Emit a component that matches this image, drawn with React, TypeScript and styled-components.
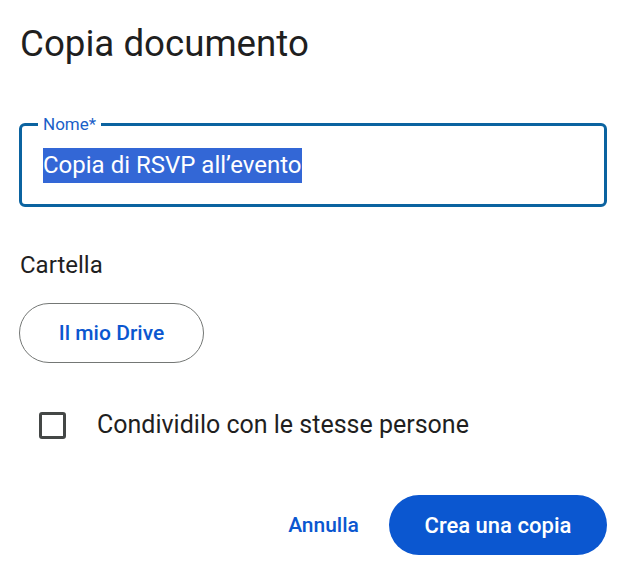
import React from 'react'
import styled, { createGlobalStyle } from 'styled-components'

const Global = createGlobalStyle`
	body {
		margin: 0;
		background: #ffffff;
		font-family: Roboto, "Noto Sans", sans-serif;
		color: #1f1f1f;
	}
`

const Dialog = styled.div`
	width: 626px;
	height: 576px;
	box-sizing: border-box;
	padding: 22px 19px 0 19px;
	display: flex;
	flex-direction: column;
`

const Title = styled.h1`
	margin: 0 0 0 1px;
	font-size: 36.7px;
	font-weight: 400;
	line-height: 44px;
	color: #1f1f1f;
`

const Field = styled.div`
	position: relative;
	margin-top: 57px;
	height: 84px;
	box-sizing: border-box;
	border: 3px solid #0b63a0;
	border-radius: 6px;
	padding: 0 21px;
	display: flex;
	align-items: center;
`

const FloatLabel = styled.span`
	position: absolute;
	top: -12px;
	left: 16px;
	padding: 0 5px;
	background: #ffffff;
	font-size: 17px;
	line-height: 20px;
	color: #1a5fc8;
`

const Selected = styled.span`
	background: #3367d6;
	color: #ffffff;
	font-size: 24px;
	line-height: 35px;
`

const Label = styled.div`
	margin: 44px 0 0 1px;
	font-size: 24px;
	line-height: 28px;
`

const Outline = styled.button`
	margin-top: 24px;
	align-self: flex-start;
	width: 185px;
	height: 60px;
	border-radius: 30px;
	border: 1px solid #747775;
	background: #ffffff;
	color: #0b57d0;
	font-family: "Roboto Medium", Roboto, sans-serif;
	font-size: 21px;
	font-weight: 500;
`

const CheckRow = styled.label`
	margin: 48px 0 0 20px;
	display: flex;
	align-items: center;
	gap: 31px;
	font-size: 25px;
	line-height: 28px;
	color: #1f1f1f;
`

const Box = styled.span`
	width: 27px;
	height: 27px;
	box-sizing: border-box;
	border: 3px solid #444746;
	border-radius: 3px;
`

const Actions = styled.div`
	margin-top: 56px;
	display: flex;
	justify-content: flex-end;
	align-items: center;
	gap: 10px;
`

const TextButton = styled.button`
	border: none;
	background: none;
	color: #0b57d0;
	font-family: "Roboto Medium", Roboto, sans-serif;
	font-size: 21px;
	font-weight: 500;
	height: 60px;
	padding: 0 20px;
`

const Filled = styled(TextButton)`
	background: #0b57d0;
	color: #ffffff;
	width: 218px;
	border-radius: 30px;
	font-size: 22px;
`

export default function App() {
	return (
		<Dialog>
			<Global />
			<Title>Copia documento</Title>
			<Field>
				<FloatLabel>Nome*</FloatLabel>
				<Selected>Copia di RSVP all’evento</Selected>
			</Field>
			<Label>Cartella</Label>
			<Outline>Il mio Drive</Outline>
			<CheckRow>
				<Box />
				Condividilo con le stesse persone
			</CheckRow>
			<Actions>
				<TextButton>Annulla</TextButton>
				<Filled>Crea una copia</Filled>
			</Actions>
		</Dialog>
	)
}
